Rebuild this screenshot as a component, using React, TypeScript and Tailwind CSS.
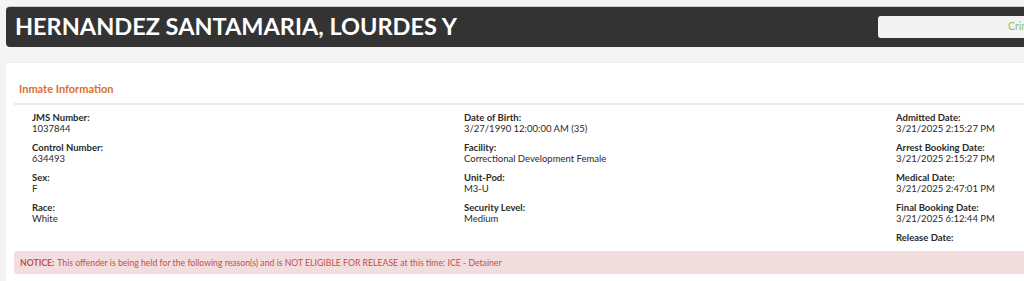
import React from 'react';

interface Field {
  label: string;
  value?: string;
}

const columns: Field[][] = [
  [
    { label: 'JMS Number:', value: '1037844' },
    { label: 'Control Number:', value: '634493' },
    { label: 'Sex:', value: 'F' },
    { label: 'Race:', value: 'White' },
  ],
  [
    { label: 'Date of Birth:', value: '3/27/1990 12:00:00 AM (35)' },
    { label: 'Facility:', value: 'Correctional Development Female' },
    { label: 'Unit-Pod:', value: 'M3-U' },
    { label: 'Security Level:', value: 'Medium' },
  ],
  [
    { label: 'Admitted Date:', value: '3/21/2025 2:15:27 PM' },
    { label: 'Arrest Booking Date:', value: '3/21/2025 2:15:27 PM' },
    { label: 'Medical Date:', value: '3/21/2025 2:47:01 PM' },
    { label: 'Final Booking Date:', value: '3/21/2025 6:12:44 PM' },
    { label: 'Release Date:' },
  ],
];

const InfoColumn: React.FC<{ fields: Field[] }> = ({ fields }) => (
  <div className="pl-[18px] flex flex-col gap-[8px]">
    {fields.map((f) => (
      <div key={f.label} className="text-[9.5px] leading-[11px] text-[#2a2a2a]">
        <div className="font-bold">{f.label}</div>
        {f.value && <div>{f.value}</div>}
      </div>
    ))}
  </div>
);

export default function App() {
  return (
    <div className="w-screen h-[281px] overflow-hidden bg-[#f4f4f4] font-['Lato','Liberation_Sans',sans-serif]">
      <div className="w-[1320px] pl-[6px] pt-[6px]">
        <div className="h-[41px] bg-[#333] rounded-[4px] border-t border-[#ccc] flex items-center justify-between pl-[9px] pr-[10px]">
          <h1 className="text-[23.5px] font-bold text-white leading-none">
            HERNANDEZ SANTAMARIA, LOURDES Y
          </h1>
          <div className="w-[432px] h-[22px] bg-[#f3f3f3] rounded-[3px] flex items-center pl-[130px] text-[10.5px] text-[#8dc26f]">
            Criminal History
          </div>
        </div>

        <div className="mt-[15px] bg-white border-t border-[#eee] pt-[18px] pb-[7px] px-[8px]">
          <h2 className="pl-[5px] text-[11px] font-bold text-[#d8702f] leading-[16px]">Inmate Information</h2>
          <div className="mt-[6px] h-[2px] bg-[#eaeaea]" />
          <div className="grid grid-cols-[432px_432px_432px] pt-[7px]">
            {columns.map((c, i) => (
              <InfoColumn key={i} fields={c} />
            ))}
          </div>
          <div className="mt-[8px] h-[23px] bg-[#f2dede] rounded-[3px] flex items-center pl-[6px] text-[8.7px] text-[#c0504d]">
            <span className="font-bold">NOTICE:</span>
            <span className="ml-[3px]">
              This offender is being held for the following reason(s) and is NOT ELIGIBLE FOR RELEASE at this time: ICE - Detainer
            </span>
          </div>
        </div>
      </div>
    </div>
  );
}
